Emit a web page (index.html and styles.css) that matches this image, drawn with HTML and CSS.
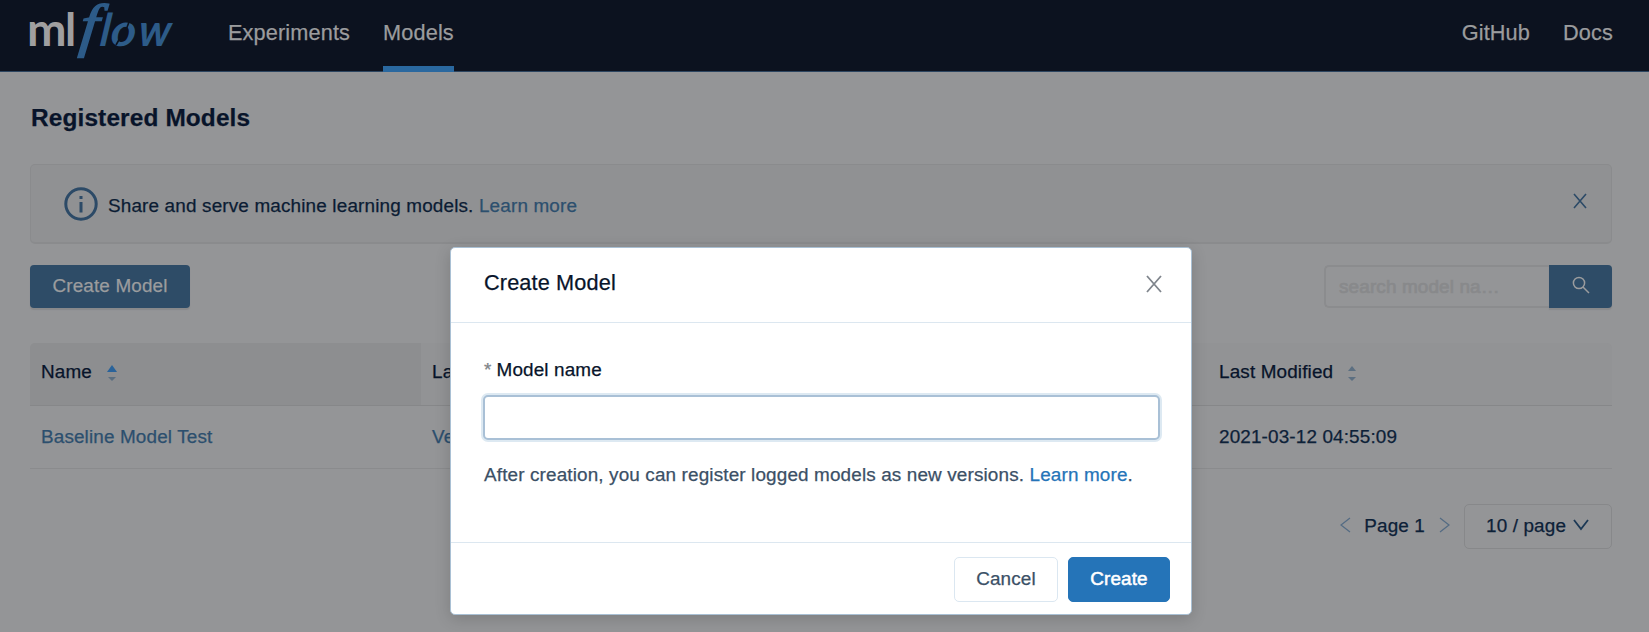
FILE: index.html
```html
<!DOCTYPE html>
<html lang="en">
<head>
<meta charset="utf-8">
<title>MLflow - Registered Models</title>
<link rel="stylesheet" href="styles.css">
</head>
<body>
<header class="topbar">
  <svg class="logo" width="150" height="66" viewBox="0 0 150 66" role="img" aria-label="mlflow">
    <g class="logo-ml">
      <text x="0" y="46" transform="matrix(1.05 0 0 1 -3 0)">m</text>
      <text x="35" y="46">l</text>
    </g>
    <g class="logo-flow">
      <text class="logo-f" transform="matrix(1.08 0 -.1 .96 48.5 45)">f</text>
      <text transform="matrix(.95 0 -.12 1 69 46)">l</text>
      <text transform="matrix(1.08 0 -.08 1 80 46)">o</text>
      <text transform="matrix(.98 0 -.1 1 107.5 46)">w</text>
    </g>
    <path class="logo-gap" d="M96 30l3-8M90 38l-4 7"/>
  </svg>
  <nav class="nav">
    <a class="nav-item">Experiments</a>
    <a class="nav-item active">Models</a>
  </nav>
  <nav class="nav nav-right">
    <a class="nav-item">GitHub</a>
    <a class="nav-item">Docs</a>
  </nav>
</header>

<main class="page">
  <h1 class="title">Registered Models</h1>

  <div class="alert">
    <svg class="alert-icon" width="34" height="34" viewBox="0 0 34 34"><circle cx="17" cy="17" r="15.2"/><path d="M17 15v10.5M17 9v3"/></svg>
    <p class="alert-text">Share and serve machine learning models. <a class="link">Learn more</a></p>
    <svg class="alert-close" width="14" height="16" viewBox="0 0 14 16"><path d="M1 1l12 14M13 1L1 15"/></svg>
  </div>

  <div class="toolbar">
    <button class="create">Create Model</button>
    <div class="search">
      <div class="search-field">search model na…</div>
      <button class="search-button">
        <svg width="18" height="18" viewBox="0 0 18 18"><circle cx="7" cy="7" r="5.6"/><path d="M11 11l6 6"/></svg>
      </button>
    </div>
  </div>

  <div class="table">
    <div class="row head">
      <div class="cell sorted">Name
        <svg class="sort asc" width="10" height="18" viewBox="0 0 10 18"><path class="up" d="M5 0l5 7H0z"/><path class="down" d="M1 12h8l-4 4z"/></svg>
      </div>
      <div class="cell">Latest Version</div>
      <div class="cell">Last Modified
        <svg class="sort" width="10" height="18" viewBox="0 0 10 18"><path class="up" d="M5 1l4 5H1z"/><path class="down" d="M1 12h8l-4 4z"/></svg>
      </div>
    </div>
    <div class="row">
      <div class="cell"><a class="link">Baseline Model Test</a></div>
      <div class="cell"><a class="link">Version 1</a></div>
      <div class="cell">2021-03-12 04:55:09</div>
    </div>
  </div>

  <div class="pagination">
    <svg class="arrow" width="11" height="16" viewBox="0 0 11 16"><path d="M10 1L1 8l9 7"/></svg>
    <span class="page-label">Page 1</span>
    <svg class="arrow" width="11" height="16" viewBox="0 0 11 16"><path d="M1 1l9 7-9 7"/></svg>
    <div class="page-size">10 / page
      <svg width="16" height="12" viewBox="0 0 16 12"><path d="M1 1l7 9 7-9"/></svg>
    </div>
  </div>
</main>

<section class="modal">
  <div class="modal-head">
    <h2 class="modal-title">Create Model</h2>
    <svg width="16" height="18" viewBox="0 0 16 18"><path d="M1 1l14 16M15 1L1 17"/></svg>
  </div>
  <div class="modal-body">
    <label class="label" for="model-name"><span class="required">*</span><span>Model name</span></label>
    <input class="input" id="model-name" type="text">
    <p class="help">After creation, you can register logged models as new versions. <a>Learn more</a>.</p>
  </div>
  <div class="modal-foot">
    <button class="button">Cancel</button>
    <button class="button primary">Create</button>
  </div>
</section>
</body>
</html>
```

FILE: styles.css
```css
* { box-sizing: border-box; }

body {
  margin: 0;
  height: 632px;
  overflow: hidden;
  position: relative;
  background: #949597;
  color: #0d2138;
  font: 18.9px/28px "Liberation Sans", Arial, sans-serif;
  letter-spacing: .14px;
  -webkit-text-stroke: .25px currentColor;
}

h1, h2, p { margin: 0; }
svg { display: block; flex: none; fill: none; overflow: visible; }
button { font: inherit; letter-spacing: inherit; margin: 0; }
.link { color: #2c4f6e; }

/* Header */
.topbar {
  display: flex;
  height: 72px;
  padding: 0 36px 0 30px;
  background: #0c121f;
  border-bottom: 1px solid #2c4560;
}
.logo { letter-spacing: 0; -webkit-text-stroke: 0; }
.logo text { font-family: Lato, sans-serif; font-size: 45px; }
.logo-ml { fill: #a09fa0; font-weight: 700; }
.logo-flow { fill: #2d5b88; font-style: italic; font-weight: 700; }
.logo .logo-f {
  font-family: "Liberation Serif", serif;
  font-size: 61px;
  font-weight: 400;
  stroke: #2d5b88;
  stroke-width: 1.6;
}
.logo-gap { stroke: #0c121f; stroke-width: 1.6; }
.nav { display: flex; gap: 33px; margin-left: 48px; }
.nav-right { margin-left: auto; }
.nav-item {
  height: 72px;
  border-bottom: 6px solid transparent;
  color: #9b9c9e;
  font-size: 21.7px;
  line-height: 66px;
}
.nav-item.active { border-color: #2a689f; }

/* Page */
.page { padding: 31px 37px 0 30px; }
.title { padding-left: 1px; color: #08142a; font-size: 24.4px; line-height: 30px; }

.alert {
  display: flex;
  align-items: center;
  height: 80px;
  margin-top: 31px;
  padding: 0 24px 0 35px;
  background: #909193;
  border: 1px solid #8a8b8d;
  border-bottom-width: 2px;
  border-radius: 5px;
}
.alert-icon { margin-left: -2px; stroke: #2c4a67; stroke-width: 3; }
.alert-text { margin-left: 10px; padding-top: 4px; color: #0b1c33; letter-spacing: .16px; }
.alert-close { margin: 0 0 6px auto; stroke: #2c4a67; stroke-width: 1.6; }

.toolbar { display: flex; justify-content: space-between; height: 43px; margin-top: 21px; }
.create {
  width: 160px;
  padding: 0 0 2px;
  border: 0;
  border-radius: 4px;
  background: #2e4c67;
  color: #9b9c9e;
  box-shadow: 0 2px 1px #88898b;
}
.search { display: flex; }
.search-field {
  width: 225px;
  padding: 0 13px;
  border: 2px solid #8b8c8e;
  border-right: 0;
  border-radius: 5px 0 0 5px;
  color: #88898b;
  line-height: 40px;
  white-space: nowrap;
  -webkit-text-stroke-width: .7px;
}
.search-button {
  display: flex;
  width: 63px;
  padding: 11px 0 0 23px;
  border: 0;
  border-radius: 0 4px 4px 0;
  background: #2e4c67;
  box-shadow: 0 2px 1px #88898b;
  stroke: #9b9c9e;
  stroke-width: 1.5;
}

/* Table */
.table { margin-top: 35px; }
.row { display: grid; grid-template-columns: 391px 787px 1fr; height: 63px; border-bottom: 1px solid #8a8b8d; }
.cell { display: flex; align-items: center; padding: 0 11px 1px; }
.head { background: #929395; border-bottom-color: #868789; border-radius: 5px 5px 0 0; color: #08142a; }
.head .cell { padding-bottom: 4px; }
.sorted { background: #8d8e90; border-radius: 5px 0 0; }
.sort { margin: 3px 0 0 14px; fill: #4a637b; }
.sort .down, .sort:not(.asc) .up { opacity: .75; }
.asc { margin-left: 15px; }
.asc .up { fill: #2a639a; }

/* Pagination */
.pagination { display: flex; justify-content: flex-end; align-items: center; height: 45px; margin-top: 35px; }
.arrow { margin-top: -4px; stroke: #536b83; stroke-width: 1.2; }
.page-label { margin: 0 14px 1px 13px; }
.page-size {
  display: flex;
  align-items: center;
  gap: 7px;
  width: 148px;
  height: 45px;
  margin-left: 14px;
  padding: 0 0 1px 21px;
  border: 1px solid #87888a;
  border-radius: 5px;
}
.page-size svg { margin-top: -2px; stroke: #1b3855; stroke-width: 1.8; }

/* Dialog */
.modal {
  position: absolute;
  left: 450px;
  top: 247px;
  width: 742px;
  height: 368px;
  display: flex;
  flex-direction: column;
  background: #fff;
  border: 1px solid #a9c0d4;
  border-radius: 5px;
  box-shadow: 0 4px 16px rgba(0, 0, 0, .16);
}
.modal-head {
  display: flex;
  justify-content: space-between;
  height: 75px;
  padding: 21px 29px 0 33px;
  border-bottom: 1px solid #dce7f0;
}
.modal-title { color: #08142a; font-size: 21.7px; font-weight: 400; line-height: 28px; }
.modal-head svg { margin-top: 6px; stroke: #7f858c; stroke-width: 1.8; }
.modal-body { display: flex; flex-direction: column; height: 219px; padding: 33px 32px 0; }
.label { display: flex; gap: 5px; padding-left: 1px; color: #08142a; }
.required { color: #808488; }
.input {
  width: 677px;
  height: 45px;
  margin: 11px 0 0;
  border: 2px solid #a9c0d6;
  border-radius: 5px;
  outline: 0;
  background: #fff;
  box-shadow: 0 0 0 2px #dde9f2;
}
.help { margin-top: 21px; padding-left: 1px; color: #3b5066; white-space: nowrap; }
.help a { color: #2574b8; }
.modal-foot {
  display: flex;
  flex: 1;
  justify-content: flex-end;
  gap: 10px;
  padding: 14px 21px 0;
  border-top: 1px solid #dce7f0;
}
.button {
  width: 104px;
  height: 45px;
  padding: 0 0 2px;
  border: 1px solid #dbe7f1;
  border-radius: 5px;
  background: #fff;
  color: #3b5066;
}
.primary { width: 102px; background: #2574b8; border-color: #2574b8; color: #fff; -webkit-text-stroke-width: .5px; }
```
